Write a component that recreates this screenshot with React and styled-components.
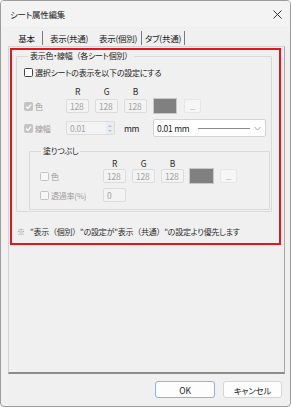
import React from 'react';
import styled, { createGlobalStyle } from 'styled-components';

const Global = createGlobalStyle`
  html, body { margin: 0; padding: 0; background: #ffffff; }
  body {
    font-family: "Noto Sans CJK JP", "Noto Sans", sans-serif;
    font-size: 8px;
    letter-spacing: -0.25px;
    color: #1b1b1b;
    font-feature-settings: "palt";
  }
  * { box-sizing: border-box; }
`;

const Window = styled.div`
  width: 291px;
  height: 407px;
  border: 1px solid #9c9c9c;
  border-radius: 4px;
  background: #f0f0f0;
  display: flex;
  flex-direction: column;
  overflow: hidden;
`;

const TitleBar = styled.div`
  height: 26px;
  display: flex;
  align-items: center;
  justify-content: space-between;
  padding: 0 8px 0 9px;
  background: #f3f3f3;
  color: #222;
  font-size: 8.5px;
`;

const Close = styled.svg`
  width: 9px;
  height: 9px;
`;

const TabRow = styled.div`
  height: 19px;
  display: flex;
  align-items: center;
  padding-left: 10px;
`;

const Tab = styled.div`
  height: 14px;
  display: flex;
  align-items: center;
  justify-content: center;
  width: ${p => p.$w}px;
  border-right: ${p => (p.$sep ? '1px solid #7a7a7a' : 'none')};
  color: #1b1b1b;
  margin-top: 2px;
  font-size: 8.5px;
`;

const Panel = styled.div`
  height: 328px;
  margin: 0 5px 0 7px;
  border: 1px solid #d4d4d4;
  border-right: 1px solid #a8a8a8;
  border-bottom: 2px solid #8d8d8d;
  display: flex;
  flex-direction: column;
`;

const RedBox = styled.div`
  margin: 1px 3px 0 1px;
  height: 197px;
  border: 2px solid #e3161c;
  padding: 0 7px 0 4px;
  display: flex;
  flex-direction: column;
`;

const Group = styled.fieldset`
  margin: ${p => (p.$inner ? '8px 1px 0 5px' : '0')};
  padding: ${p => (p.$inner ? '0 0 7px 10px' : '0 0 1px 7px')};
  border: 1px solid #d9d9d9;
  border-radius: 1px;
  min-width: 0;
  display: flex;
  flex-direction: column;
`;

const Legend = styled.legend`
  margin-left: ${p => (p.$inner ? 1 : 4)}px;
  padding: 0 2px;
  line-height: 12px;
  color: #1b1b1b;
`;

const FW = styled.span`
  font-feature-settings: normal;
`;

const Row = styled.div`
  display: flex;
  align-items: center;
  height: ${p => p.$h || 12}px;
  margin-top: ${p => p.$mt || 0}px;
`;

const LabelCell = styled.div`
  width: ${p => p.$w}px;
  display: flex;
  align-items: center;
  gap: 2px;
  color: ${p => (p.$disabled ? '#9a9a9a' : '#1b1b1b')};
  white-space: nowrap;
`;

const Box = styled.span`
  width: 9px;
  height: 9px;
  flex: none;
  border-radius: 1.5px;
  border: 1px solid ${p => (p.$checked ? '#c4c4c4' : p.$disabled ? '#c2c2c2' : '#444')};
  background: ${p => (p.$checked ? '#c4c4c4' : p.$disabled ? '#f7f7f7' : '#fff')};
  display: flex;
  align-items: center;
  justify-content: center;
`;

const Inputs = styled.div`
  display: flex;
  align-items: center;
  gap: 6px;
`;

const ColLabel = styled.div`
  width: 23px;
  text-align: center;
  color: #2a2a2a;
  font-size: 8.5px;
`;

const Field = styled.div`
  width: ${p => p.$w || 23}px;
  height: 14px;
  border: 1px solid #dcdcdc;
  border-radius: 2px;
  background: #f3f3f3;
  color: #a3a3a3;
  padding-left: 3px;
  display: flex;
  align-items: center;
  position: relative;
  font-size: 8.5px;
`;

const Spin = styled.div`
  position: absolute;
  right: 0;
  top: 0;
  bottom: 0;
  width: 8px;
  background: #e9edf2;
  display: flex;
  flex-direction: column;
  align-items: center;
  justify-content: center;
  gap: 3px;
`;

const Swatch = styled.div`
  width: ${p => p.$w}px;
  height: 16px;
  margin-left: ${p => p.$ml}px;
  background: #808080;
  border: 1px solid #c8c8c8;
`;

const DotsButton = styled.div`
  width: 17px;
  height: 14px;
  margin-left: ${p => p.$ml}px;
  border: 1px solid #e6e6e6;
  border-radius: 2px;
  background: #f6f6f6;
  color: #a0a0a0;
  font-size: 7px;
  display: flex;
  align-items: flex-end;
  justify-content: center;
  line-height: 9px;
`;

const Unit = styled.div`
  width: 38px;
  padding-left: 9px;
  color: #1b1b1b;
  font-size: 8.5px;
`;

const Select = styled.div`
  width: 113px;
  height: 18px;
  border: 1px solid #d4d4d4;
  border-radius: 2px;
  background: #ffffff;
  display: flex;
  align-items: center;
  padding-left: 3px;
  color: #1b1b1b;
  font-size: 8.5px;
`;

const LineSample = styled.div`
  width: 52px;
  height: 1px;
  margin-left: 9px;
  background: #8a8a8a;
`;

const Chevron = styled.svg`
  width: 7px;
  height: 5px;
  margin-left: auto;
  margin-right: 4px;
`;

const Note = styled.div`
  margin-top: 13px;
  height: 12px;
  display: flex;
  align-items: center;
  padding-left: 1px;
  color: #2b2b2b;
  white-space: nowrap;
`;

const NoteMark = styled.span`
  color: #8a8a8a;
  width: 13px;
`;

const Footer = styled.div`
  display: flex;
  justify-content: flex-end;
  gap: 8px;
  padding: 7px 8px 0 0;
`;

const Button = styled.div`
  width: ${p => p.$w}px;
  height: 17px;
  border: 1px solid ${p => (p.$primary ? '#8fb3d9' : '#d6d6d6')};
  border-radius: 3px;
  background: #fdfdfd;
  display: flex;
  align-items: center;
  justify-content: center;
  color: #1b1b1b;
  font-size: 8.5px;
`;

function Check({ checked, disabled }) {
  return (
    <Box $checked={checked} $disabled={disabled}>
      {checked && (
        <svg width="7" height="7" viewBox="0 0 7 7">
          <path d="M1 3.6 L2.8 5.3 L6 1.6" fill="none" stroke="#fff" strokeWidth="1.2" />
        </svg>
      )}
    </Box>
  );
}

function Arrow({ up }) {
  return (
    <svg width="4" height="2" viewBox="0 0 4 2">
      <path d={up ? 'M0 2 L2 0 L4 2Z' : 'M0 0 L2 2 L4 0Z'} fill="#b9c1cb" />
    </svg>
  );
}

export default function App() {
  return (
    <>
      <Global />
      <Window>
        <TitleBar>
          <span>シート属性編集</span>
          <Close viewBox="0 0 9 9">
            <path d="M0.5 0.5 L8.5 8.5 M8.5 0.5 L0.5 8.5" stroke="#333" strokeWidth="1" />
          </Close>
        </TitleBar>
        <TabRow>
          <Tab $w={32} $sep>基本</Tab>
          <Tab $w={52}>表示(共通)</Tab>
          <Tab $w={47} $sep>表示(個別)</Tab>
          <Tab $w={43} $sep>タブ(共通)</Tab>
        </TabRow>
        <Panel>
          <RedBox>
            <Group>
              <Legend>表示色・線幅<FW>（</FW>各シート個別<FW>）</FW></Legend>
              <Row $mt={4}>
                <LabelCell $w={200}>
                  <Check />
                  <span>選択シートの表示を以下の設定にする</span>
                </LabelCell>
              </Row>
              <Row $mt={7}>
                <LabelCell $w={42} />
                <Inputs>
                  <ColLabel>R</ColLabel>
                  <ColLabel>G</ColLabel>
                  <ColLabel>B</ColLabel>
                </Inputs>
              </Row>
              <Row $h={16} $mt={1}>
                <LabelCell $w={42} $disabled>
                  <Check checked />
                  <span>色</span>
                </LabelCell>
                <Inputs>
                  <Field>128</Field>
                  <Field>128</Field>
                  <Field>128</Field>
                </Inputs>
                <Swatch $w={24} $ml={6} />
                <DotsButton $ml={7}>...</DotsButton>
              </Row>
              <Row $h={18} $mt={5}>
                <LabelCell $w={42} $disabled>
                  <Check checked />
                  <span>線幅</span>
                </LabelCell>
                <Field $w={49}>
                  0.01
                  <Spin>
                    <Arrow up />
                    <Arrow />
                  </Spin>
                </Field>
                <Unit>mm</Unit>
                <Select>
                  <span>0.01 mm</span>
                  <LineSample />
                  <Chevron viewBox="0 0 7 5">
                    <path d="M0.5 1 L3.5 4 L6.5 1" fill="none" stroke="#9a9a9a" strokeWidth="0.9" />
                  </Chevron>
                </Select>
              </Row>
              <Group $inner>
                <Legend $inner>塗りつぶし</Legend>
                <Row $h={11}>
                  <LabelCell $w={63} />
                  <Inputs>
                    <ColLabel>R</ColLabel>
                    <ColLabel>G</ColLabel>
                    <ColLabel>B</ColLabel>
                  </Inputs>
                </Row>
                <Row $h={16}>
                  <LabelCell $w={63} $disabled>
                    <Check disabled />
                    <span>色</span>
                  </LabelCell>
                  <Inputs>
                    <Field>128</Field>
                    <Field>128</Field>
                    <Field>128</Field>
                  </Inputs>
                  <Swatch $w={25} $ml={5} />
                  <DotsButton $ml={6}>...</DotsButton>
                </Row>
                <Row $h={14} $mt={4}>
                  <LabelCell $w={63} $disabled>
                    <Check disabled />
                    <span>透過率(%)</span>
                  </LabelCell>
                  <Field>0</Field>
                </Row>
              </Group>
            </Group>
            <Note>
              <NoteMark>※</NoteMark>
              <span>"表示<FW>（</FW>個別<FW>）</FW>"の設定が"表示<FW>（</FW>共通<FW>）</FW>"の設定より優先します</span>
            </Note>
          </RedBox>
        </Panel>
        <Footer>
          <Button $w={60} $primary>OK</Button>
          <Button $w={59}>キャンセル</Button>
        </Footer>
      </Window>
    </>
  );
}
